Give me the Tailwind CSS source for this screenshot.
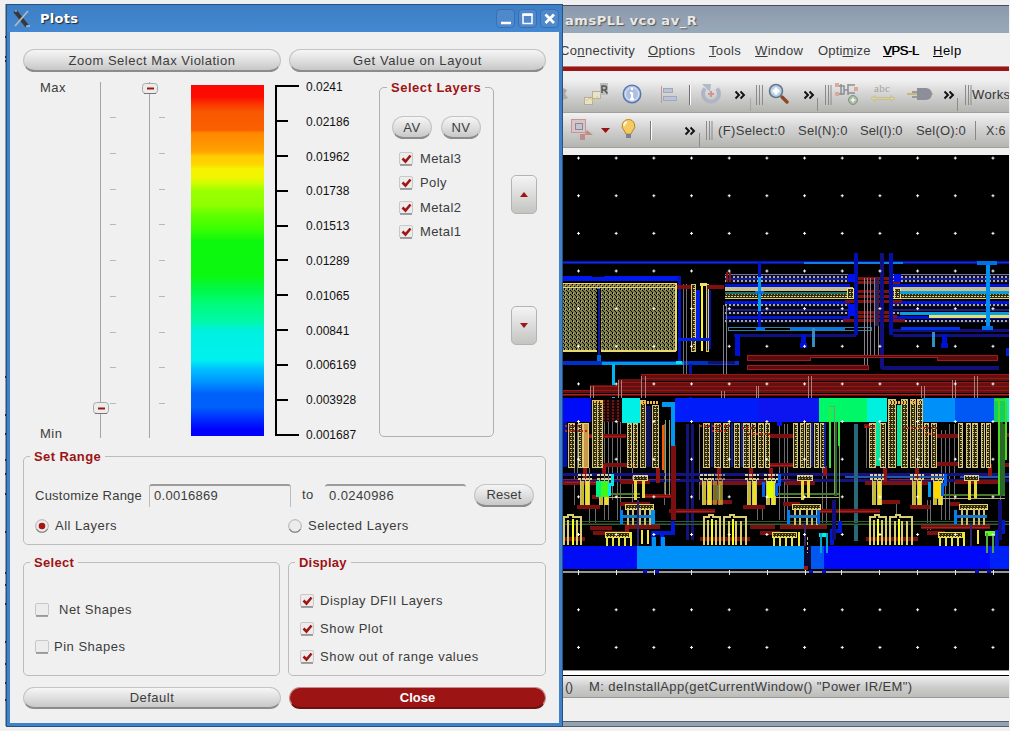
<!DOCTYPE html>
<html lang="en">
<head>
<meta charset="utf-8">
<title>Plots</title>
<script src="https://cdn.jsdelivr.net/npm/@tailwindcss/browser@4"></script>
</head>
<body class="relative w-[1010px] h-[731px] overflow-hidden bg-[#f0f0f0] font-['Liberation_Sans',Arial,sans-serif] text-[13px] leading-[16px] tracking-[0.5px] text-[#3c3c3c]">

<!-- desktop edge behind the dialog -->
<svg class="absolute left-0 top-0" width="8" height="731" shape-rendering="crispEdges"><path d="M5.5 4V726" stroke="#8fa0ac"/><path d="M5 37h1M5 57h1M5 61h1M5 377h1M5 415h1M5 434h1M5 460h1M5 474h1M5 494h1M5 532h1M5 573h1M5 585h1M5 604h1M5 642h1M5 664h1M5 683h1M5 700h1" stroke="#1c2838" stroke-width="2"/></svg>

<!-- layout editor window -->
<div class="absolute left-[562px] top-[5px] w-[447px] h-[722px] flex flex-col bg-[#f0f0f0] border-l border-[#4a4a58]">
  <div class="h-[28px] shrink-0 border-t border-[#4a4c58] bg-linear-to-b from-[#8d99ae] to-[#98a9b8] flex items-center pl-[2px] pt-[2px] font-['DejaVu_Sans',sans-serif] font-bold text-[13px] tracking-[0.55px] text-[#e8e8e8] [text-shadow:1px_1px_1px_#555]">amsPLL vco av_R</div>
  <div class="h-[33px] shrink-0 flex items-center pt-[3px] overflow-hidden tracking-[0.35px] whitespace-nowrap">
    <span class="w-[88px] -ml-[3px] shrink-0">Co<u>n</u>nectivity</span>
    <span class="w-[61px] shrink-0"><u>O</u>ptions</span>
    <span class="w-[46px] shrink-0"><u>T</u>ools</span>
    <span class="w-[63px] shrink-0"><u>W</u>indow</span>
    <span class="w-[65px] shrink-0 tracking-[0.15px]">Opti<u>m</u>ize</span>
    <span class="w-[50px] shrink-0 text-black tracking-[-0.4px] [text-shadow:0.4px_0_0_#000]"><u>V</u>PS-L</span>
    <span class="text-black tracking-[0.5px]"><u>H</u>elp</span>
  </div>
  <div class="h-[5px] shrink-0 bg-[#9c1414] border-t border-[#b08080]"></div>
  <div class="h-[9px] shrink-0"></div>
  <!-- toolbar 1 -->
  <div class="h-[33px] shrink-0 bg-linear-to-b from-[#f0f0f0] via-[#d0d0d0] to-[#b4b4b0] border-b border-[#a0a0a0]">
    <div class="flex items-center h-full">
      <svg width="187" height="32" viewBox="563 80 187 32" class="shrink-0">
        <path d="M563 88l4 2-2 4 3 4-5 2z" fill="#b0a8a0"/>
        <g stroke="#b5ae9c" fill="#e9e2cb"><rect x="584.5" y="97.500" width="8" height="7"/><rect x="592.500" y="91.500" width="8" height="7"/></g>
        <rect x="600" y="83" width="8" height="12" fill="#bdbdbd"/><path d="M602 93v-7h2.500a1.800 1.800 0 0 1 0 4H602m2.500 0l3 3.500" fill="none" stroke="#555" stroke-width="1.500"/>
        <path d="M586 101l4-3 3 3 5-5" stroke="#e4c860" fill="none"/>
        <circle cx="632" cy="94" r="8.800" fill="#aebfe4" stroke="#5870a8" stroke-width="1.300"/><circle cx="632" cy="94" r="6.500" fill="none" stroke="#dfe8fa"/><path d="M632 92.500v6M630 99h4M630 93h2M631 89h2" stroke="#fff" stroke-width="2.200"/>
        <path d="M661.500 86v17" stroke="#c49494"/><rect x="663.500" y="88.500" width="9" height="4" fill="#bcc3d6" stroke="#a0a8c0"/><rect x="663.500" y="96.500" width="13" height="4" fill="#bcc3d6" stroke="#a0a8c0"/>
        <path d="M689.500 85v20" stroke="#707070"/><path d="M690.500 85v20" stroke="#fff"/>
        <path d="M705 88.500a8 8 0 1 0 12 0" fill="none" stroke="#b0b5c6" stroke-width="4"/><path d="M702 84h9l-1 8z" fill="#b4b9c8"/><path d="M708 94h6M711 91v6" stroke="#d0958c" stroke-width="2"/>
        <path d="M735.500 91.500l3.500 3.500-3.500 3.500M740.500 91.500l3.500 3.500-3.500 3.500" fill="none" stroke="#111" stroke-width="1.900"/>
      </svg>
      <svg width="259" height="32" viewBox="750 80 259 32" class="shrink-0">
        <path d="M750 98v13M817.500 98v13M957.500 98v13" stroke="#8c8c8c"/>
        <g stroke="#8a8a8a"><path d="M756.500 85v20M759.500 85v20M762.500 85v20M825.500 85v20M828.500 85v20M831 85v20M965.500 85v20M968.500 85v20M971 85v20"/></g>
        <path d="M782 97l5 5" stroke="#8c4a24" stroke-width="3.500" stroke-linecap="round"/><circle cx="776" cy="91" r="6.500" fill="#b9cfe2" stroke="#64788c" stroke-width="1.600"/><path d="M772.500 91h7M776 87.500v7" stroke="#fff" stroke-width="3"/>
        <path d="M804.500 91.500l3.500 3.500-3.500 3.500M809.500 91.500l3.500 3.500-3.500 3.500M944.500 91.500l3.500 3.500-3.500 3.500M949.500 91.500l3.500 3.500-3.500 3.500" fill="none" stroke="#111" stroke-width="1.900"/>
        <path d="M839 86h5v8h-5M844 90h4M848 84v11M848 85h7M848 93h7M841 84v11" fill="none" stroke="#8c9094" stroke-width="1.500"/><path d="M835 83h4v4h-4zM835 92h4v4h-4zM854 87h4v4h-4z" fill="#dca898"/><circle cx="853" cy="100" r="4.500" fill="#a7b9a5" stroke="#80957f"/><path d="M850.500 100h5M853 97.500v5" stroke="#f4f4f4" stroke-width="1.500"/>
        <text x="874" y="92" font-size="11" letter-spacing=".3" font-family="Liberation Serif" fill="#a8a098">abc</text><path d="M871 98.500l4-3v2h16v-2l4 3-4 3v-2h-16v2z" fill="#dccf98" stroke="#b8ae80" stroke-width=".5"/>
        <path d="M907 94h10M929 94h4" stroke="#c8b67c" stroke-width="2"/><path d="M917 88h9a5.500 5.500 0 0 1 0 12h-9z" fill="#8c8f9a"/><path d="M912 92h5M912 97h5" stroke="#888" stroke-width="1.500"/>
        <text x="972" y="99" font-size="13" letter-spacing=".35" fill="#333">Works</text>
      </svg>
    </div>
  </div>
  <!-- toolbar 2 -->
  <div class="h-[35px] shrink-0 bg-linear-to-b from-[#f2f2f2] via-[#d0d0d0] to-[#b4b4b0] border-b border-[#a0a0a0] flex items-center whitespace-nowrap">
    <svg width="155" height="34" viewBox="563 113 155 34" class="shrink-0">
      <rect x="571.500" y="119.500" width="14" height="13" fill="#dcc4c4" stroke="#c09898"/><rect x="575.500" y="123.500" width="7" height="6" fill="#c4c4cc" stroke="#8888a0"/><path d="M580 134h5v6h-5zM587 130l6 5h-8z" fill="#c08c88"/>
      <path d="M601 128h9l-4.500 5z" fill="#981414"/>
      <path d="M628.500 119.500a6.500 6.500 0 0 1 4 11.500l-1.500 3h-5l-1.500-3a6.500 6.500 0 0 1 4-11.500z" fill="#f4ca62" stroke="#b98528"/><path d="M627 122q-3 1-3 4" stroke="#fff7d0" stroke-width="2" fill="none"/><path d="M626 134h5v4h-5z" fill="#79838b"/>
      <path d="M650.500 121v19" stroke="#777"/><path d="M651.500 121v19" stroke="#fff"/>
      <path d="M685.500 127.500l3.500 3.500-3.500 3.500M690.500 127.500l3.500 3.500-3.500 3.500" fill="none" stroke="#111" stroke-width="1.900"/>
      <path d="M699.500 133v14" stroke="#8c8c8c"/><path d="M706.500 121v19M709.500 121v19M712 121v19" stroke="#8a8a8a"/>
    </svg>
    <span class="w-[80px] pt-[2px] shrink-0 tracking-[0.35px]">(F)Select:0</span>
    <span class="w-[62px] pt-[2px] shrink-0 tracking-[0.25px]">Sel(N):0</span>
    <span class="w-[56px] pt-[2px] shrink-0 tracking-[0.1px]">Sel(I):0</span>
    <span class="w-[59px] pt-[2px] shrink-0 tracking-[0.2px]">Sel(O):0</span>
    <span class="h-[19px] w-[11px] shrink-0 border-l border-[#888]"></span>
    <span class="shrink-0 pt-[2px] text-[12.500px] tracking-[0.3px]">X:6</span>
  </div>
  <div class="h-[7px] shrink-0"></div>
  <!-- chip layout -->
  <svg width="446" height="515" viewBox="563 155 446 515" class="shrink-0 bg-black" shape-rendering="crispEdges">
    <defs>
      <pattern id="grid" x="577" y="156.600" width="37.680" height="37.640" patternUnits="userSpaceOnUse"><rect x="0" y="1" width="3" height="1" fill="#fff"/><rect x="1" y="0" width="1" height="3" fill="#fff"/></pattern>
      <pattern id="cap" width="4" height="4" patternUnits="userSpaceOnUse"><rect width="4" height="4" fill="#80804c"/><rect width="1" height="2" fill="#000"/><rect x="2" y="2" width="1" height="1" fill="#000"/><rect x="1" y="1" width="1" height="1" fill="#c8c080"/><rect x="3" y="3" width="1" height="1" fill="#1a1010"/></pattern>
      <pattern id="col" width="3" height="4" patternUnits="userSpaceOnUse"><rect width="3" height="4" fill="#302a10"/><rect width="2" height="1" fill="#e0d080"/><rect x="1" y="2" width="1" height="1" fill="#b8a858"/></pattern>
      <pattern id="dash" width="4" height="4" patternUnits="userSpaceOnUse"><rect width="4" height="4" fill="#0c0c30"/><rect width="2" height="2" fill="#a8a8a8"/></pattern>
      <pattern id="red" y="374" width="4" height="4" patternUnits="userSpaceOnUse"><rect width="4" height="4" fill="#641010"/><rect width="4" height="1" fill="#981616"/></pattern>
      <g id="rows">
        <path d="M0 274H125M0 282H125M0 305H125M0 313H125M0 322H125" stroke="#707098" stroke-width="1"/>
        <rect x="0" y="275" width="125" height="3" fill="url(#dash)"/><rect x="0" y="280" width="125" height="3" fill="url(#dash)"/>
        <rect x="0" y="304" width="125" height="3" fill="url(#dash)"/><rect x="0" y="312" width="125" height="3" fill="url(#dash)"/><rect x="0" y="320" width="125" height="3" fill="url(#dash)"/>
        <path d="M0 285H125M0 302.500H125M0 317H125" stroke="#0014d8" stroke-width="3"/>
        <path d="M0 309.500H125M0 279H125" stroke="#1c1c90" stroke-width="2"/>
        <rect x="0" y="287" width="128" height="4" fill="#c8c088"/><rect x="0" y="292" width="128" height="2" fill="#207068"/><rect x="0" y="294" width="128" height="4" fill="url(#col)"/><path d="M0 298.500H128" stroke="#d8d080"/>
      </g>
      <g id="bot">
        <path d="M0 545v-28h5v-2h4v2h7v28M4 545v-25M12 545v-25M20 545v-28h6v-2h4v2h12v28M25 545v-24M32 545v-24M37 545v-24" fill="none" stroke="#d8d070" stroke-width="2"/>
        <path d="M8 545v-26M29 545v-26" stroke="#ffff20" stroke-width="2"/>
      </g>
      <g id="mini">
        <path d="M-3 475h14M-3 479h14" stroke="#d8d098" stroke-width="2" stroke-dasharray="3 1"/>
        <rect x="0" y="481" width="3" height="24" fill="#c8b830"/><path d="M-.500 479v26M4 479v26M8.500 479v26" stroke="#c8c080"/><rect x="5" y="481" width="3" height="24" fill="#f0e020"/>
      </g>
      <g id="blk">
        <path d="M1 504h28v5H1z" fill="url(#col)" stroke="#e8d860"/>
        <path d="M4 509v16M9 509v16M16 509v16M21 509v16M26 509v16" stroke="#c8c070" stroke-width="2"/><path d="M-3 516h32" stroke="#1878c8" stroke-width="3"/><path d="M-3 510v14" stroke="#0080f0" stroke-width="3"/>
      </g>
      <g id="foot"><path d="M0 532h24v5H0z" fill="url(#col)" stroke="#f0e040"/><path d="M2 537v9M8 537v9M14 537v9M20 537v9" stroke="#e8e048" stroke-width="2"/></g>
    </defs>

    <!-- top wires -->
    <path d="M563 262.500H1009" stroke="#0010c8" stroke-width="3"/><path d="M563 262.500H1009" stroke="#1830a0"/>
    <path d="M804 262.500H903" stroke="#1080e0" stroke-width="2"/>
    <path d="M563 278.500H680" stroke="#0018f0" stroke-width="5"/><path d="M592 276H604" stroke="#000" stroke-width="2"/>
    <path d="M679.500 276V364" stroke="#0014b8" stroke-width="3"/>
    <rect x="563" y="283" width="113" height="68" fill="url(#cap)"/><path d="M563 283.500H676M563 287.500H676M676 283V351M563 351H676" fill="none" stroke="#e8d870" stroke-width="1.500"/><path d="M563 285.500H676" stroke="#a06020" stroke-dasharray="2 2"/>
    <rect x="597" y="289" width="4" height="63" fill="#000"/><path d="M599 289V361" stroke="#1018a0" stroke-width="2"/><path d="M598.500 355v8" stroke="#0068e0" stroke-width="4"/>
    <path d="M563 362.500H739" stroke="#0030c8" stroke-width="4"/><path d="M602 363H684" stroke="#0098e8" stroke-width="3"/><path d="M708 362.500H735" stroke="#101070" stroke-width="3"/><path d="M676 362.500h6" stroke="#00e8f0" stroke-width="3"/>
    <path d="M613.500 364V398" stroke="#00b8f0" stroke-width="3"/>
    <path d="M683.500 284V376M686.500 284V376" stroke="#707078"/>
    <rect x="695" y="290" width="5" height="50" fill="#0020e8"/>
    <path d="M691 284h4v67h-4zM706 284h2v67h-2z" fill="url(#col)" stroke="#d8c878"/><path d="M701.500 284V351" stroke="#fff820" stroke-width="2"/><path d="M700 284h7" stroke="#f0e060" stroke-width="3"/><path d="M710 290V349" stroke="#0010b0" stroke-width="2"/><path d="M678 339H710" stroke="#0020e8" stroke-width="3"/>
    <path d="M677 287H691M708 286.500H724" stroke="#801010" stroke-width="4"/>
    <path d="M690 364V400" stroke="#0014b0" stroke-width="3"/>

    <!-- device arrays -->
    <use href="#rows" x="725"/><use href="#rows" x="893"/>
    <path d="M728 327.500H871" stroke="#3080a8" stroke-width="1"/><path d="M728 330.500H871M728 327v4M871.500 327v4" stroke="#3080a8"/>
    <path d="M790 328.500H845" stroke="#0878e0" stroke-width="3"/>
    <path d="M734 335.500H856M893 335.500H1009M893 330H1009" stroke="#101080" stroke-width="3"/>
    <path d="M737.500 334V356M803 334V348M944 334V348" stroke="#0010d0" stroke-width="5"/><path d="M800 345h7M941 345h7" stroke="#0010d0" stroke-width="5"/><path d="M813.500 328V347M933 332V347" stroke="#3090c0" stroke-width="3"/>
    <path d="M901 328.500H960" stroke="#0030f0" stroke-width="3"/>
    <path d="M759.500 262V330" stroke="#0014d0" stroke-width="3"/><path d="M759.500 277V311" stroke="#0098f0" stroke-width="3"/><path d="M755 292.500h9M756 328h9" stroke="#0070e8" stroke-width="3"/>
    <path d="M723.500 305V376M726.500 305V376" stroke="#808088"/>
    <path d="M727 272v10M730 272v10" stroke="#801818" stroke-width="2"/>
    <rect x="847" y="288" width="6" height="10" fill="url(#col)" stroke="#f0e070"/><rect x="894" y="288" width="6" height="10" fill="url(#col)" stroke="#f0e070"/>
    <path d="M900 292.500H1009M900 313H1009" stroke="#08a0e0" stroke-width="3"/><path d="M929 316.500H1009" stroke="#e8e070" stroke-width="3"/>
    <rect x="857" y="276" width="34" height="50" fill="#000"/>
    <path d="M843 320.500H905M857 278H893M857 282.500H900M857 291H893M857 296H893M845 301.500H902M857 312H893M857 316H897" stroke="#7c1212" stroke-width="3"/>
    <path d="M864.500 278V366M867.500 278V366M870.500 278V358M874.500 278V358M878 278V358" stroke="#88808c"/><path d="M877 278V326" stroke="#302060" stroke-width="4"/>
    <path d="M856 253V335M891 253V335" stroke="#0010b0" stroke-width="4"/><path d="M882 253V369" stroke="#101080" stroke-width="4"/>
    <path d="M851 274v8M897 274v8M851 304v12" stroke="#0010f0" stroke-width="7"/>
    <path d="M882 367.500H999" stroke="#101078" stroke-width="4"/>
    <path d="M987.500 262V330" stroke="#0090f0" stroke-width="4"/><path d="M977 262.500h20M982 328h11" stroke="#0070e8" stroke-width="4"/>
    <path d="M1007 348v8" stroke="#0020d0" stroke-width="3"/>

    <!-- red bus -->
    <path d="M747 355h250v5h-60v-3H810v3H747zM747 365.500h121v4H747z" fill="#5c0c0c" stroke="#a01c1c"/>
    <rect x="641" y="374" width="368" height="6" fill="url(#red)"/><rect x="618" y="379" width="391" height="7" fill="url(#red)"/><rect x="590" y="385" width="419" height="6" fill="url(#red)"/><rect x="563" y="390" width="446" height="6" fill="url(#red)"/>
    <path d="M563 396.500H1009M563 393H1009M641 381H1009" stroke="#000"/><path d="M563 394.500H1009" stroke="#b82020"/>
    <path d="M590.500 386v12M593 386v12M618.500 380v18M621 380v18M641.500 376v22M645 376v22M721 391v7M724 391v7M756 386v12M758 386v12M808.500 376v22M811 376v22M921 386v12M924 386v12M952 380v18M955 380v18M974 376v22M977 376v22" stroke="#a88080"/>
    <path d="M613.500 364V385" stroke="#00b8f0" stroke-width="3"/>

    <!-- wiring between the rails -->
    <path d="M577 424V478M604 410V520M608.500 400V520M612 400V500M617.500 400V520M620.500 400V520M664 424V505M699.500 424V500M717 468V500M779.500 424V520M784 424V520M787.500 424V520M822.500 424V524M826.500 470V524M866 424V468M941 430V520M945 430V520M949 424V520M954 424V500M1000 424V500M589.500 468V524M595 506V524M574 468V505M632 468V505M719.500 468V505M757 506V520M762 506V520M896 500V515M927 500V530M930 500V530" stroke="#6c6c70"/>
    <path d="M563 474H1009M563 480H1009" stroke="#141480" stroke-width="3"/><path d="M563 479H680M722 479H790M890 479H940" stroke="#702070"/>
    <path d="M687.500 424V540M692.500 424V540" stroke="#141478" stroke-width="3"/>
    <path d="M855.500 424V541" stroke="#286878" stroke-width="4"/>
    <path d="M845 477h100M960 477h49" stroke="#2858a0" stroke-width="2"/>
    <path d="M563 521H1009M563 524.500H1009" stroke="#306030"/><path d="M563 523H1009" stroke="#1c2818"/>
    <path d="M585 435.500H626M604 464.500H634M563 482.500H612M620 481.500H650M770 435.500H793M770 464.500H797M700 482.500H770M785 482.500H815M864 426H880M936 435.500H958M936 464H958M865 482.500H930M955 482H1000M675 511H715M820 511H880M577 506.500H600M642 496H674M590 527.500H612M625 527H660M704 502H732M743 506.500H765M750 527H775M780 527H827M880 502H900M910 506.500H930M921 527H990M593 533H626M620 504H650M783 504H800M950 504H960M565 539H585M700 539H750M866 539H918M760 533H780M927 533H945M592 497h8M1000 435h9M1000 465h9M669 511h6M840 511h40" stroke="#7c1010" stroke-width="4"/>
    <path d="M585 436H626M565 482H612M770 465H793M642 496H674M675 511H715M820 511H880M921 527H990" stroke="#b01c1c"/>
    <path d="M673.500 445V520" stroke="#7c1010" stroke-width="5"/><path d="M585 468v12M604 464v10M657.500 468v15M719 468v12M751 468v12M771 468v12M825 466v10M885 468v14M917 468v14M990 464v12M627 524v14" stroke="#901414" stroke-width="4"/>
    <path d="M608 494H640M775 494H840M935 495H1005" stroke="#48782c" stroke-width="2"/><path d="M608 497H640M775 497H840M935 498H1005" stroke="#b0b070"/>
    <path d="M665.500 420V495M669.500 420V495" stroke="#90a060"/>
    <path d="M663 425v45" stroke="#ff5800" stroke-width="2"/>
    <path d="M591 400h37v22h-37z" fill="#180808"/><path d="M604 400v22M608 400v22M613 400v22M618 400v22" stroke="#701818" stroke-width="2" stroke-dasharray="2 1"/>

    <!-- power rail -->
    <rect x="563" y="398" width="28" height="24" fill="#000cf8"/><rect x="563" y="422" width="4" height="45" fill="#0010b0"/>
    <rect x="622" y="398" width="18" height="25" fill="#00f0e8"/>
    <rect x="675" y="398" width="144" height="24" fill="#001cf8"/><rect x="758" y="398" width="61" height="24" fill="#0c14f0"/>
    <rect x="819" y="398" width="48" height="24" fill="#00f868"/><rect x="867" y="398" width="20" height="24" fill="#00f0e0"/>
    <rect x="922" y="398" width="33" height="24" fill="#0090fa"/><rect x="955" y="398" width="39" height="24" fill="#0058f4"/><rect x="994" y="398" width="15" height="24" fill="#10d060"/><rect x="1005" y="398" width="4" height="24" fill="#00f0c0"/>
    <path d="M662 402h13v44h-4v-39h-9z" fill="#0098f0"/>
    <rect x="777" y="422" width="5" height="4" fill="#0010f0"/>

    <!-- tall device columns -->
    <g fill="url(#col)" stroke="#d4c880">
      <path d="M568 423h6v44h-6zM578 423h4v44h-4zM592 400h5v67h-5zM597 400h5v67h-5zM627 423h4v44h-4zM633 423h4v44h-4zM640 400h5v67h-5zM652 405h6v62h-6z"/>
      <path d="M703 423h6v44h-6zM714 423h6v44h-6zM723 423h6v44h-6zM734 423h5v44h-5zM743 423h6v44h-6zM751 423h4v44h-4zM758 423h5v44h-5zM765 423h4v44h-4z"/>
      <path d="M793 423h4v44h-4zM800 423h4v44h-4zM806 423h4v44h-4zM814 423h4v44h-4zM820 423h4v44h-4z"/>
      <path d="M869 423h6v44h-6zM880 423h5v44h-5zM888 399h7v68h-7zM901 399h6v68h-6zM910 399h5v68h-5zM917 399h5v68h-5zM924 423h4v44h-4zM931 423h5v44h-5z"/>
      <path d="M958 423h4v44h-4zM966 423h4v44h-4zM972 423h5v44h-5zM981 423h3v44h-3zM986 423h4v44h-4z"/>
    </g>
    <path d="M583 423h5v44h-5z" fill="#c89848" stroke="#f0c870"/>
    <path d="M594 401h8M641 402h17M889 402h17M911 402h10" stroke="#f8b848" stroke-width="3" stroke-dasharray="2 1"/>
    <rect x="646" y="406" width="5" height="61" fill="#101060"/>
    <path d="M877.500 422V466M898.500 405V466" stroke="#00e8a0" stroke-width="4"/><path d="M711.500 423v44M741.500 423v44M732 423v44M811.500 423v44M825 423v44" stroke="#0c20a0" stroke-width="2"/>
    <path d="M565 426h14M565 431h22M700 426h30M712 431h14M748 434h22M742 428h14M865 427h12M903 428h36M925 434h12" stroke="#b82418" stroke-width="2" stroke-dasharray="2 2"/>
    <path d="M829.500 406V468M839 422V446" stroke="#38e838" stroke-width="2"/><path d="M835.500 422V496M1001 422V496" stroke="#306030" stroke-width="3"/><path d="M829.500 406h5v88M839.500 446v76" fill="none" stroke="#70a850"/>
    <path d="M1006 402v58M995 400h12M999 400V495" fill="none" stroke="#50d820" stroke-width="2"/><path d="M1003 424v70" stroke="#286828" stroke-width="4"/>

    <!-- small devices -->
    <use href="#mini" x="581"/><use href="#mini" x="600"/><use href="#mini" x="703"/><use href="#mini" x="714" opacity=".6"/><use href="#mini" x="748"/><use href="#mini" x="767"/><use href="#mini" x="873"/><use href="#mini" x="913"/><use href="#mini" x="934"/>
    <path d="M633 475h14v5h-14zM797 475h15v5h-15zM964 475h14v5h-14z" fill="url(#col)" stroke="#d8d090"/><path d="M635 480v20M643 480v18M802 480v20M808 480v18M969 480v20M975 480v18" stroke="#e8d840" stroke-width="3"/>
    <rect x="596" y="481" width="5" height="16" fill="#00f080"/><path d="M601 481h8v16h-8z" fill="#40f818"/><path d="M612 474v10h-3v12" fill="none" stroke="#00e8f0" stroke-width="3"/>
    <path d="M767 481h6v17h-6z" fill="#e0ff00"/><path d="M763 482v15M779 474v10h-3v12" fill="none" stroke="#0060f0" stroke-width="3"/>
    <path d="M934 481h6v17h-6z" fill="#ffd800"/><path d="M929 482v15" stroke="#00a0f0" stroke-width="3"/><path d="M945 474v10h-3v12" fill="none" stroke="#0060f0" stroke-width="3"/>
    <use href="#blk" x="624"/><use href="#blk" x="791"/><use href="#blk" x="958"/>
    <rect x="651" y="510" width="4" height="14" fill="#0090f0"/><rect x="817" y="510" width="3" height="14" fill="#0060e8"/>
    <path d="M564 545v-28h4v-2h5v2h8v28M568 545v-25M577 545v-25" fill="none" stroke="#d8d070" stroke-width="2"/><path d="M573 545v-26" stroke="#ffff20" stroke-width="2"/>
    <use href="#bot" x="704"/><use href="#bot" x="870"/>
    <use href="#foot" x="605"/><use href="#foot" x="772"/><use href="#foot" x="938"/>
    <path d="M631 532v14M642 530v14M648 530v14M799 532v14M805 530v14M964 532v14M978 530v14" stroke="#f0e840" stroke-width="2"/>
    <path d="M673 521v12h-20v12M662 535v10M839.500 521v10h-8v14M1003 520v12h-6v14" fill="none" stroke="#0018d8" stroke-width="4"/><path d="M834 500v40M1000 500v40" stroke="#101078" stroke-width="4"/>
    <path d="M637.500 500v46M805 524v22M971 524v22" stroke="#302870" stroke-width="2"/>

    <!-- ground rail -->
    <rect x="563" y="546" width="74" height="23" fill="#000cf4"/><rect x="637" y="546" width="167" height="23" fill="#0090fa"/><rect x="804" y="546" width="7" height="23" fill="#080830"/><path d="M807 537v16" stroke="#d8d070" stroke-dasharray="3 2"/><path d="M806 566v4" stroke="#901818" stroke-width="4"/>
    <rect x="811" y="546" width="13" height="23" fill="#0058f0"/><rect x="824" y="546" width="185" height="23" fill="#0008fa"/><rect x="990" y="546" width="19" height="23" fill="#0020f8"/>
    <path d="M654 537v9M663 537v9" stroke="#0090f0" stroke-width="4"/><path d="M819 533h9v4h-9z" fill="#00f0e8"/><path d="M821 533v20M827 533v20" fill="none" stroke="#00a8d0" stroke-width="2"/><path d="M985 531h10v5h-10z" fill="#60f820"/><path d="M987 533v20M993 533v20" fill="none" stroke="#50a840" stroke-width="2"/>
    <path d="M563 572H1009" stroke="#989898" stroke-width="2"/><path d="M645 570v3M657 570v3M811 570v3M824 570v3M977 570v3M989 570v3" stroke="#000cc8" stroke-width="4"/>
    <path d="M578.500 570v5M616 570v5M654 570v5M691.500 570v5M729 570v5M767 570v5M805 570v5M841.500 570v5M879 570v5M917 570v5M955 570v5M993 570v5" stroke="#e8e8e8"/>
    <rect x="563" y="155" width="446" height="412" fill="url(#grid)"/><rect x="563" y="576" width="446" height="94" fill="url(#grid)"/>
  </svg>
  <div class="h-[6px] shrink-0 bg-white border-t border-b border-t-[#999] border-b-black"></div>
  <div class="h-[22px] shrink-0 bg-linear-to-b from-[#f0f0f0] via-[#cecece] to-[#bcbcb8] border-b border-[#999] flex items-center pl-[2px] whitespace-pre tracking-[0.4px]"><span class="w-[24px] tracking-[-0.5px]">()</span><span>M: deInstallApp(getCurrentWindow() "Power IR/EM")</span></div>
  <div class="grow"></div>
  <div class="h-[6px] shrink-0 bg-[#94a3b2] border-y border-[#55606c]"></div>
</div>

<!-- Plots dialog -->
<div class="absolute left-[6px] top-[4px] w-[557px] h-[723px] flex flex-col bg-[#f0f0f0] border-x-4 border-b-4 border-[#3f82c8] outline-1 -outline-offset-1 outline-[#2a5080]">
  <div class="h-[28px] -mx-[3px] shrink-0 border-t border-[#26456e] bg-linear-to-b from-[#3c7fc4] to-[#4488d2] flex items-center pl-[6px] pr-[3px]">
    <svg width="18" height="18" viewBox="0 0 18 18"><path d="M2 1l12 15" stroke="#383838" stroke-width="4"/><path d="M15 1L2 16" stroke="#b8b8b8" stroke-width="1.800"/><path d="M2 1l2 0M13 16h4" stroke="#ddd"/></svg>
    <span class="ml-[9px] grow font-['DejaVu_Sans',sans-serif] font-bold text-[13px] tracking-[0.3px] text-white [text-shadow:1px_1px_1px_#223]">Plots</span>
    <div class="flex gap-[3px]">
      <svg width="19" height="19" class="rounded-sm border border-[#3570b8] bg-[#5088cc]"><path d="M4 13h10" stroke="#fff" stroke-width="2.500"/></svg>
      <svg width="19" height="19" class="rounded-sm border border-[#3570b8] bg-[#5088cc]"><path d="M4 5h9v8.500H4z" fill="none" stroke="#fff" stroke-width="1.500"/><path d="M3.300 4.500h10.400" stroke="#fff" stroke-width="2.500"/></svg>
      <svg width="19" height="19" class="rounded-sm border border-[#3570b8] bg-[#5088cc]"><path d="M4.500 4.500l8.500 8.500M13 4.500L4.500 13" stroke="#fff" stroke-width="2.700"/></svg>
    </div>
  </div>

  <div class="pt-[17px] pl-[13px] pr-[13px] flex gap-[8px] shrink-0">
    <button class="w-[258px] h-[23px] pt-[1px] rounded-full border border-[#c4c4c4] border-b-2 border-b-[#8c8c8c] bg-linear-to-b from-[#f6f6f6] via-[#e0e0e0] to-[#c8c8c8]">Zoom Select Max Violation</button>
    <button class="w-[257px] h-[23px] pt-[1px] rounded-full border border-[#c4c4c4] border-b-2 border-b-[#8c8c8c] bg-linear-to-b from-[#f6f6f6] via-[#e0e0e0] to-[#c8c8c8] tracking-[0.6px]">Get Value on Layout</button>
  </div>

  <div class="h-[378px] shrink-0 pl-[30px] flex items-start">
    <div class="w-[50px] h-[364px] pt-[8px] flex flex-col justify-between"><span>Max</span><span class="-mb-[6px]">Min</span></div>
    <svg width="86" height="370" viewBox="90 72 86 370" class="shrink-0">
      <path d="M100.500 82V438M149.500 82V438" stroke="#a4a4a4"/>
      <path d="M110 117.500h6M110 153.500h6M110 189.500h6M110 224.500h6M110 260.500h6M110 296.500h6M110 332.500h6M110 367.500h6M110 403.500h6M159 117.500h6M159 153.500h6M159 189.500h6M159 224.500h6M159 260.500h6M159 296.500h6M159 332.500h6M159 367.500h6M159 403.500h6" stroke="#b8b8b8"/>
      <g fill="#ececec" stroke="#a8a8a8"><rect x="142.500" y="83.500" width="15" height="10" rx="3"/><rect x="93.500" y="402.500" width="15" height="11" rx="3"/></g>
      <path d="M144 93.500h12M95 413.500h12" stroke="#777"/><path d="M147 88.500h7M98 408.500h7" stroke="#a01414" stroke-width="2"/>
    </svg>
    <div class="w-[73px] h-[351px] mt-[13px] ml-[15px] shrink-0 bg-[linear-gradient(to_bottom,#fc0800_0px,#fc0c00_12px,#fc3000_18px,#f85800_27px,#fa6000_45px,#ff8800_48px,#ff9400_58px,#ffa400_67px,#ffcc00_71px,#ffd400_79px,#f4f400_84px,#f4f400_92px,#c8ff00_99px,#98ff00_106px,#90ff00_120px,#60ff00_130px,#40ff00_142px,#0cf80c_157px,#0cf810_190px,#00f848_205px,#00fc78_218px,#00f8a8_236px,#00f0e0_246px,#00f0f0_275px,#00c0ff_284px,#0098ff_296px,#0060fa_309px,#0060fa_322px,#0030ff_333px,#0000fc_345px)]"></div>
    <div class="w-[24px] h-[351px] mt-[13px] ml-[11px] shrink-0 border-l-2 border-black flex flex-col justify-between">
      <i class="block h-[2px] w-[22px] bg-black"></i><i class="block h-[2px] w-[11px] bg-black"></i><i class="block h-[2px] w-[11px] bg-black"></i><i class="block h-[2px] w-[11px] bg-black"></i><i class="block h-[2px] w-[11px] bg-black"></i><i class="block h-[2px] w-[11px] bg-black"></i><i class="block h-[2px] w-[11px] bg-black"></i><i class="block h-[2px] w-[11px] bg-black"></i><i class="block h-[2px] w-[11px] bg-black"></i><i class="block h-[2px] w-[11px] bg-black"></i><i class="block h-[2px] w-[22px] bg-black"></i>
    </div>
    <div class="w-[73px] h-[364px] mt-[7px] pl-[7px] shrink-0 flex flex-col justify-between text-[12px] tracking-[0px] text-[#111]">
      <span>0.0241</span><span>0.02186</span><span>0.01962</span><span>0.01738</span><span>0.01513</span><span>0.01289</span><span>0.01065</span><span>0.00841</span><span>0.006169</span><span>0.003928</span><span>0.001687</span>
    </div>
    <div class="relative w-[115px] h-[350px] ml-[7px] mt-[15px] shrink-0 rounded-[5px] border border-[#b0b0b0] px-[12px] pt-[28px]">
      <b class="absolute left-[7px] -top-[8px] bg-[#f0f0f0] px-[4px] text-[#9c1414] whitespace-nowrap">Select Layers</b>
      <div class="flex gap-[9px] mb-[12px]">
        <button class="w-[40px] h-[23px] pt-[1px] rounded-full border border-[#c4c4c4] border-b-2 border-b-[#8c8c8c] bg-linear-to-b from-[#f6f6f6] via-[#e0e0e0] to-[#c8c8c8]">AV</button>
        <button class="w-[40px] h-[23px] pt-[1px] rounded-full border border-[#c4c4c4] border-b-2 border-b-[#8c8c8c] bg-linear-to-b from-[#f6f6f6] via-[#e0e0e0] to-[#c8c8c8]">NV</button>
      </div>
      <div class="flex flex-col gap-[8.400px] pl-[7px] tracking-[0.4px]">
        <label class="flex items-center gap-[7px]"><svg width="14" height="14"><use href="#checked"/></svg>Metal3</label>
        <label class="flex items-center gap-[7px]"><svg width="14" height="14"><use href="#checked"/></svg>Poly</label>
        <label class="flex items-center gap-[7px]"><svg width="14" height="14"><use href="#checked"/></svg>Metal2</label>
        <label class="flex items-center gap-[7px]"><svg width="14" height="14"><use href="#checked"/></svg>Metal1</label>
      </div>
    </div>
    <div class="ml-[17px] mt-[103px] flex flex-col gap-[92px] shrink-0">
      <button class="w-[26px] h-[39px] rounded-[5px] border border-[#b4b4b4] bg-linear-to-b from-[#f4f4f4] via-[#dcdcdc] to-[#c4c4c0] flex items-center justify-center"><svg width="8" height="5"><path d="M0 5l4-5 4 5z" fill="#a01414"/></svg></button>
      <button class="w-[26px] h-[39px] rounded-[5px] border border-[#b4b4b4] bg-linear-to-b from-[#f4f4f4] via-[#dcdcdc] to-[#c4c4c0] flex items-center justify-center"><svg width="8" height="5"><path d="M0 0l4 5 4-5z" fill="#a01414"/></svg></button>
    </div>
  </div>

  <div class="relative mx-[13px] mt-[6px] h-[89px] w-[523px] shrink-0 rounded-[5px] border border-[#bcbcbc] pl-[11px] pt-[26px]">
    <b class="absolute left-[6px] -top-[8px] bg-[#f0f0f0] px-[4px] text-[#9c1414] tracking-[0.4px]">Set Range</b>
    <div class="flex items-center h-[24px]">
      <span class="w-[114px] pt-[1px] tracking-[0.25px]">Customize Range</span>
      <span class="w-[142px] h-[23px] border-t-2 border-x border-t-[#9c9c9c] border-x-[#bcbcbc] rounded-t-[3px] pl-[4px] pt-[2px] tracking-[0.3px]">0.0016869</span>
      <span class="w-[34px] pl-[11px]">to</span>
      <span class="w-[141px] h-[23px] border-t-2 border-t-[#9c9c9c] rounded-t-[3px] pl-[4px] pt-[2px] tracking-[0.4px]">0.0240986</span>
      <button class="ml-[8px] w-[60px] h-[23px] pt-[1px] rounded-full border border-[#c4c4c4] border-b-2 border-b-[#8c8c8c] bg-linear-to-b from-[#f6f6f6] via-[#e0e0e0] to-[#c8c8c8] tracking-[0.2px]">Reset</button>
    </div>
    <div class="flex items-center mt-[11px]">
      <label class="w-[253px] flex items-center gap-[6px]"><svg width="14" height="14" class="overflow-visible"><use href="#radio"/><circle cx="7" cy="7" r="3.300" fill="#a81414"/></svg>All Layers</label>
      <label class="flex items-center gap-[6px]"><svg width="14" height="14" class="overflow-visible"><use href="#radio"/></svg>Selected Layers</label>
    </div>
  </div>

  <div class="flex gap-[8px] mx-[13px] mt-[17px] shrink-0">
    <div class="relative w-[257px] h-[114px] rounded-[5px] border border-[#bcbcbc] pl-[11px] pt-[39px]">
      <b class="absolute left-[6px] -top-[8px] bg-[#f0f0f0] px-[4px] text-[#9c1414] tracking-[0.3px]">Select</b>
      <label class="flex items-center gap-[10px]"><svg width="14" height="14"><use href="#box"/></svg>Net Shapes</label>
      <label class="flex items-center gap-[5px] mt-[21px]"><svg width="14" height="14"><use href="#box"/></svg>Pin Shapes</label>
    </div>
    <div class="relative w-[258px] h-[114px] rounded-[5px] border border-[#bcbcbc] pl-[11px] pt-[30px]">
      <b class="absolute left-[6px] -top-[8px] bg-[#f0f0f0] px-[4px] text-[#9c1414] tracking-[0.2px]">Display</b>
      <div class="flex flex-col gap-[12px]">
        <label class="flex items-center gap-[6px]"><svg width="14" height="14"><use href="#checked"/></svg>Display DFII Layers</label>
        <label class="flex items-center gap-[6px]"><svg width="14" height="14"><use href="#checked"/></svg>Show Plot</label>
        <label class="flex items-center gap-[6px]"><svg width="14" height="14"><use href="#checked"/></svg>Show out of range values</label>
      </div>
    </div>
  </div>

  <div class="flex gap-[8px] mx-[13px] mt-[11px] shrink-0">
    <button class="w-[258px] h-[22px] pt-[1px] rounded-full border border-[#c4c4c4] border-b-2 border-b-[#8c8c8c] bg-linear-to-b from-[#f6f6f6] via-[#e0e0e0] to-[#c8c8c8]">Default</button>
    <button class="w-[257px] h-[22px] rounded-full border border-[#c88c8c] border-b-2 border-b-[#6c1010] bg-[#9c1414] text-white font-bold tracking-[0px]">Close</button>
  </div>
</div>

<!-- shared control symbols -->
<svg width="0" height="0" class="absolute">
  <defs>
    <g id="box"><rect x=".5" y=".5" width="13" height="12" rx="1.500" fill="#ececec" stroke="#c8c8c8"/><path d="M1 13h12" stroke="#888" stroke-width="1.500"/></g>
    <g id="checked"><use href="#box"/><path d="M3.500 6.500l3 3 5-6" fill="none" stroke="#a01414" stroke-width="2.600"/></g>
    <g id="radio"><circle cx="7" cy="7" r="6.300" fill="#ececec" stroke="#b0b0b0"/><path d="M1.500 10a6.300 6.300 0 0 0 11 0" fill="none" stroke="#808080" stroke-width="1.200"/></g>
  </defs>
</svg>
</body>
</html>
